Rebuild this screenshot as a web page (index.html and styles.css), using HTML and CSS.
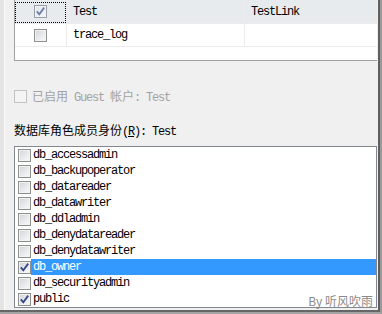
FILE: index.html
```html
<!DOCTYPE html>
<html lang="zh-CN">
<head>
  <meta charset="UTF-8">
  <title>用户映射</title>
  <link rel="stylesheet" href="styles.css">
</head>
<body>
<div class="shell">
  <div class="frame">
    <div class="strip"></div>
    <div class="pane">
      <div class="grid">
        <div class="grid-row current">
          <div class="cell check focus">
            <span class="cb dim"><svg viewBox="0 0 11 11"><path d="M1.8 5.4 L4.3 8.3 L9.2 1.6" /></svg></span>
          </div>
          <div class="cell name">Test</div>
          <div class="cell last">TestLink</div>
        </div>
        <div class="grid-row">
          <div class="cell check"><span class="cb"></span></div>
          <div class="cell name">trace_log</div>
          <div class="cell last"></div>
        </div>
      </div>

      <div class="guest">
        <span class="cb off"></span>
        <span class="guest-text"><span class="cjk">已启用</span> Guest <span class="cjk">帐户</span>: Test</span>
      </div>

      <div class="caption"><span class="cjk">数据库角色成员身份</span>(<u>R</u>): Test</div>

      <ul class="roles">
        <li><span class="cb"></span><span class="role">db_accessadmin</span></li>
        <li><span class="cb"></span><span class="role">db_backupoperator</span></li>
        <li><span class="cb"></span><span class="role">db_datareader</span></li>
        <li><span class="cb"></span><span class="role">db_datawriter</span></li>
        <li><span class="cb"></span><span class="role">db_ddladmin</span></li>
        <li><span class="cb"></span><span class="role">db_denydatareader</span></li>
        <li><span class="cb"></span><span class="role">db_denydatawriter</span></li>
        <li class="selected"><span class="cb"><svg viewBox="0 0 11 11"><path d="M1.8 5.4 L4.3 8.3 L9.2 1.6" /></svg></span><span class="role">db_owner</span></li>
        <li><span class="cb"></span><span class="role">db_securityadmin</span></li>
        <li><span class="cb"><svg viewBox="0 0 11 11"><path d="M1.8 5.4 L4.3 8.3 L9.2 1.6" /></svg></span><span class="role">public</span></li>
      </ul>
    </div>
  </div>
  <div class="mark">By 听风吹雨</div>
</div>
</body>
</html>
```

FILE: styles.css
```css
html, body {
  margin: 0;
  background-color: #f0f0f0;
}
body {
  width: 382px;
  height: 314px;
  overflow: hidden;
  font-family: "Liberation Mono", "Noto Sans CJK SC", monospace;
  font-size: 12px;
  letter-spacing: -1.2px;
  line-height: 16px;
  color: #000;
}
.cjk {
  font-family: "Noto Sans CJK SC", sans-serif;
  font-size: 12px;
  letter-spacing: 0;
}
.shell {
  position: relative;
  height: 314px;
  box-sizing: border-box;
  border-right: 2px solid #9a9a9a;
  border-bottom: 2px solid #a4a4a4;
}
.frame {
  display: flex;
  height: 100%;
  box-sizing: border-box;
  border-right: 2px solid #5f5f5f;
  border-bottom: 2px solid #666;
  overflow: hidden;
}
.strip {
  width: 4px;
  background-color: #e4e4e4;
  border-right: 1px solid #fafafa;
}
.pane {
  flex: 1;
  padding: 0 1px 0 9px;
  display: flex;
  flex-direction: column;
}

/* mapping grid */
.grid {
  height: 60px;
  background-color: #fff;
  border-left: 1px solid #a0a0a0;
  border-bottom: 1px solid #a0a0a0;
}
.grid-row {
  display: flex;
  height: 22px;
  border-bottom: 1px solid #ececec;
}
.grid-row.current {
  height: 23px;
  background-color: #e7ebee;
}
.cell {
  display: flex;
  align-items: center;
  padding-left: 6px;
  border-right: 1px solid #ececec;
}
.cell.check {
  position: relative;
  width: 51px;
  padding: 0;
  justify-content: center;
}
.cell.focus::after {
  content: "";
  position: absolute;
  top: 2px;
  left: 0;
  right: 0;
  bottom: 0;
  border: 1px dotted #000;
}
.cell.name {
  width: 171px;
}
.cell.last {
  flex: 1;
  border-right: none;
}

/* checkboxes */
.cb {
  display: inline-block;
  flex: none;
  width: 13px;
  height: 13px;
  box-sizing: border-box;
  border: 1px solid #8e8f8f;
  background: linear-gradient(135deg, #d0d3d8 0%, #e9eaec 55%, #fbfbfb 100%);
  box-shadow: inset 0 0 0 1px #f2f2f2;
}
.cb svg {
  display: block;
  width: 11px;
  height: 11px;
}
.cb path {
  fill: none;
  stroke: #34478a;
  stroke-width: 1.8;
}
.cb.dim {
  border-color: #9aa0a8;
  background: linear-gradient(135deg, #dfe3ea, #f6f7f9);
}
.cb.dim path {
  stroke: #6f7ea6;
}
.cb.off {
  border-color: #c2c2c2;
  background: #f4f4f4;
  box-shadow: none;
}

/* guest line */
.guest {
  display: flex;
  align-items: center;
  gap: 5px;
  margin-top: 29px;
  height: 13px;
  color: #a3a3a3;
}

.caption {
  margin-top: 19px;
  height: 16px;
}

/* role list */
.roles {
  list-style: none;
  margin: 8px 0 0;
  padding: 0;
  background-color: #fff;
  border: 1px solid #828790;
}
.roles li {
  display: flex;
  align-items: center;
  height: 16px;
  padding-left: 3px;
}
.role {
  flex: 1;
  padding-left: 2px;
  height: 16px;
}
.roles li.selected .role {
  background-color: #3399ff;
  color: #fff;
}

.mark {
  position: absolute;
  right: 7px;
  bottom: 4px;
  font-family: "Noto Sans CJK SC", sans-serif;
  font-size: 12px;
  letter-spacing: 0;
  line-height: 14px;
  color: #8a8a8a;
}
```
